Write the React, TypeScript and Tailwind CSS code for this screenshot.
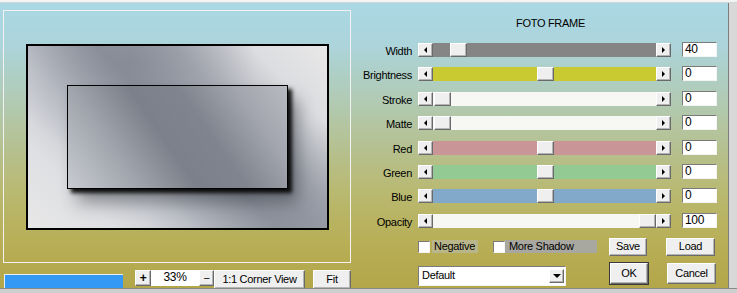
import React from 'react';

const sliders = [
  { label: 'Width', track: 'bg-[#858585]', thumb: 17, value: '40' },
  { label: 'Brightness', track: 'bg-[#c9c932]', thumb: 104, value: '0' },
  { label: 'Stroke', track: 'bg-[#f7f7f4]', thumb: 1, value: '0' },
  { label: 'Matte', track: 'bg-[#f7f7f4]', thumb: 1, value: '0' },
  { label: 'Red', track: 'bg-[#c99597]', thumb: 104, value: '0' },
  { label: 'Green', track: 'bg-[#93c993]', thumb: 104, value: '0' },
  { label: 'Blue', track: 'bg-[#82a9c9]', thumb: 104, value: '0' },
  { label: 'Opacity', track: 'bg-[#f7f7f4]', thumb: 206, value: '100' },
];

const raised =
  'bg-[#efefef] border border-t-white border-l-white border-r-[#6a6a6a] border-b-[#6a6a6a] shadow-[inset_-1px_-1px_0_#b4b4b4]';
const sunken =
  'bg-white border border-t-[#7a7a7a] border-l-[#7a7a7a] border-r-[#f4f4f4] border-b-[#f4f4f4]';

const Arrow = ({ dir }: { dir: 'left' | 'right' | 'down' }) => {
  if (dir === 'left')
    return <div className="w-0 h-0 border-y-[3px] border-y-transparent border-r-[3px] border-r-black" />;
  if (dir === 'right')
    return <div className="w-0 h-0 border-y-[3px] border-y-transparent border-l-[3px] border-l-black" />;
  return <div className="w-0 h-0 border-x-[4px] border-x-transparent border-t-[4px] border-t-black" />;
};

const SliderRow = ({ s }: { s: (typeof sliders)[number] }) => (
  <div className="flex h-[15px] items-start">
    <div className="w-[57px] text-right leading-[18px] whitespace-nowrap">{s.label}</div>
    <div className="ml-[6px] mt-[1px] flex h-[14px]">
      <div className={`w-[15px] h-[14px] flex items-center justify-center ${raised}`}>
        <Arrow dir="left" />
      </div>
      <div className={`relative w-[223px] h-[14px] ${s.track}`}>
        <div className={`absolute top-0 w-[17px] h-[14px] ${raised}`} style={{ left: s.thumb }} />
      </div>
      <div className={`w-[15px] h-[14px] flex items-center justify-center ${raised}`}>
        <Arrow dir="right" />
      </div>
    </div>
    <div className={`ml-[11px] w-[35px] h-[15px] pl-[2px] text-[12px] leading-[13px] ${sunken}`}>{s.value}</div>
  </div>
);

const Check = () => <div className={`w-[12px] h-[12px] ${sunken}`} />;

export default function App() {
  return (
    <div className="w-[737px] h-[293px] overflow-hidden flex flex-col bg-[#d4d4d4] text-black text-[11px] tracking-[-0.3px] font-['Liberation_Sans',Arial,sans-serif]">
      <div className="h-[3px] bg-[#f4f4f4] border-b border-[#cdd6d8]" />
      <div className="flex h-[285px]">
        <div className="w-[729px] flex border-r border-[#7d7d7d] bg-[linear-gradient(180deg,#aad8e5_0%,#acd4da_15%,#b1cab2_35%,#b6c08e_52%,#b9b86e_68%,#b8ae55_85%,#b3a64a_100%)]">
          {/* preview */}
          <div className="w-[355px] flex flex-col pl-[3px] pt-[7px]">
            <div className="w-[348px] h-[253px] border border-[#f2f2f2] flex items-center justify-center">
              <div className="w-[303px] h-[186px] border-2 border-black flex items-center justify-center bg-[radial-gradient(ellipse_at_35%_8%,rgba(120,124,136,0.55)_0%,rgba(120,124,136,0)_45%),radial-gradient(ellipse_at_92%_95%,rgba(130,134,146,0.5)_0%,rgba(130,134,146,0)_40%),linear-gradient(45deg,#e8e8e8_0%,#dedfe2_18%,#c4c7ce_34%,#969aa4_52%,#aeb1b9_68%,#dcdde0_84%,#e8e8e8_100%)]">
                <div className="w-[221px] h-[104px] border border-black bg-[linear-gradient(55deg,#c8cbd1_0%,#a0a4ac_25%,#7c808a_45%,#80848e_62%,#a3a6ae_82%,#b8bac2_100%)] shadow-[4px_4px_4px_rgba(0,0,0,0.9),10px_14px_16px_rgba(40,44,52,0.45)]" />
              </div>
            </div>
            <div className="mt-[7px] h-[18px] flex items-start">
              <div className="ml-[1px] mt-[4px] w-[119px] h-[14px] bg-[#3399f5] border-t border-l border-[#e6eef8]" />
              <div className={`ml-[12px] w-[16px] h-[16px] flex items-center justify-center font-bold text-[12px] leading-none ${raised}`}>+</div>
              <div className="w-[48px] h-[16px] bg-white text-center text-[12px] leading-[15px]">33%</div>
              <div className={`w-[15px] h-[16px] flex items-center justify-center leading-none ${raised}`}>−</div>
              <div className={`w-[91px] h-[19px] flex items-center justify-center ${raised}`}>1:1 Corner View</div>
              <div className={`ml-[8px] w-[38px] h-[19px] flex items-center justify-center ${raised}`}>Fit</div>
            </div>
          </div>

          {/* controls */}
          <div className="flex-1 flex flex-col pt-[14px]">
            <div className="pl-[18px] text-center leading-[13px]">FOTO FRAME</div>
            <div className="mt-[12px] flex flex-col gap-[9.4px]">
              {sliders.map((s) => (
                <SliderRow key={s.label} s={s} />
              ))}
            </div>
            <div className="mt-[10px] h-[18px] flex items-center">
              <div className="ml-[63px]">
                <Check />
              </div>
              <div className="ml-[2px] w-[46px] h-[13px] pl-[2px] leading-[13px] bg-[#b9b68c]">Negative</div>
              <div className="ml-[15px]">
                <Check />
              </div>
              <div className="w-[92px] h-[13px] pl-[4px] leading-[13px] bg-[#a9a8a0]">More Shadow</div>
              <div className={`ml-[12px] w-[38px] h-[18px] flex items-center justify-center ${raised}`}>Save</div>
              <div className={`ml-[19px] w-[49px] h-[18px] flex items-center justify-center ${raised}`}>Load</div>
            </div>
            <div className="mt-[7px] flex items-start">
              <div className={`ml-[63px] mt-[3px] w-[148px] h-[20px] flex items-center ${sunken}`}>
                <div className="flex-1 pl-[3px]">Default</div>
                <div className={`mr-[1px] w-[15px] h-[14px] flex items-center justify-center ${raised}`}>
                  <Arrow dir="down" />
                </div>
              </div>
              <div className={`ml-[44px] w-[38px] h-[21px] flex items-center justify-center outline outline-1 outline-[#3a3a3a] ${raised}`}>OK</div>
              <div className={`ml-[19px] w-[49px] h-[21px] flex items-center justify-center ${raised}`}>Cancel</div>
            </div>
          </div>
        </div>
        <div className="flex-1 bg-[#d8d8d8]" />
      </div>
      <div className="flex-1 border-t border-[#8a8a8a] bg-[#cfcfcf]" />
    </div>
  );
}
